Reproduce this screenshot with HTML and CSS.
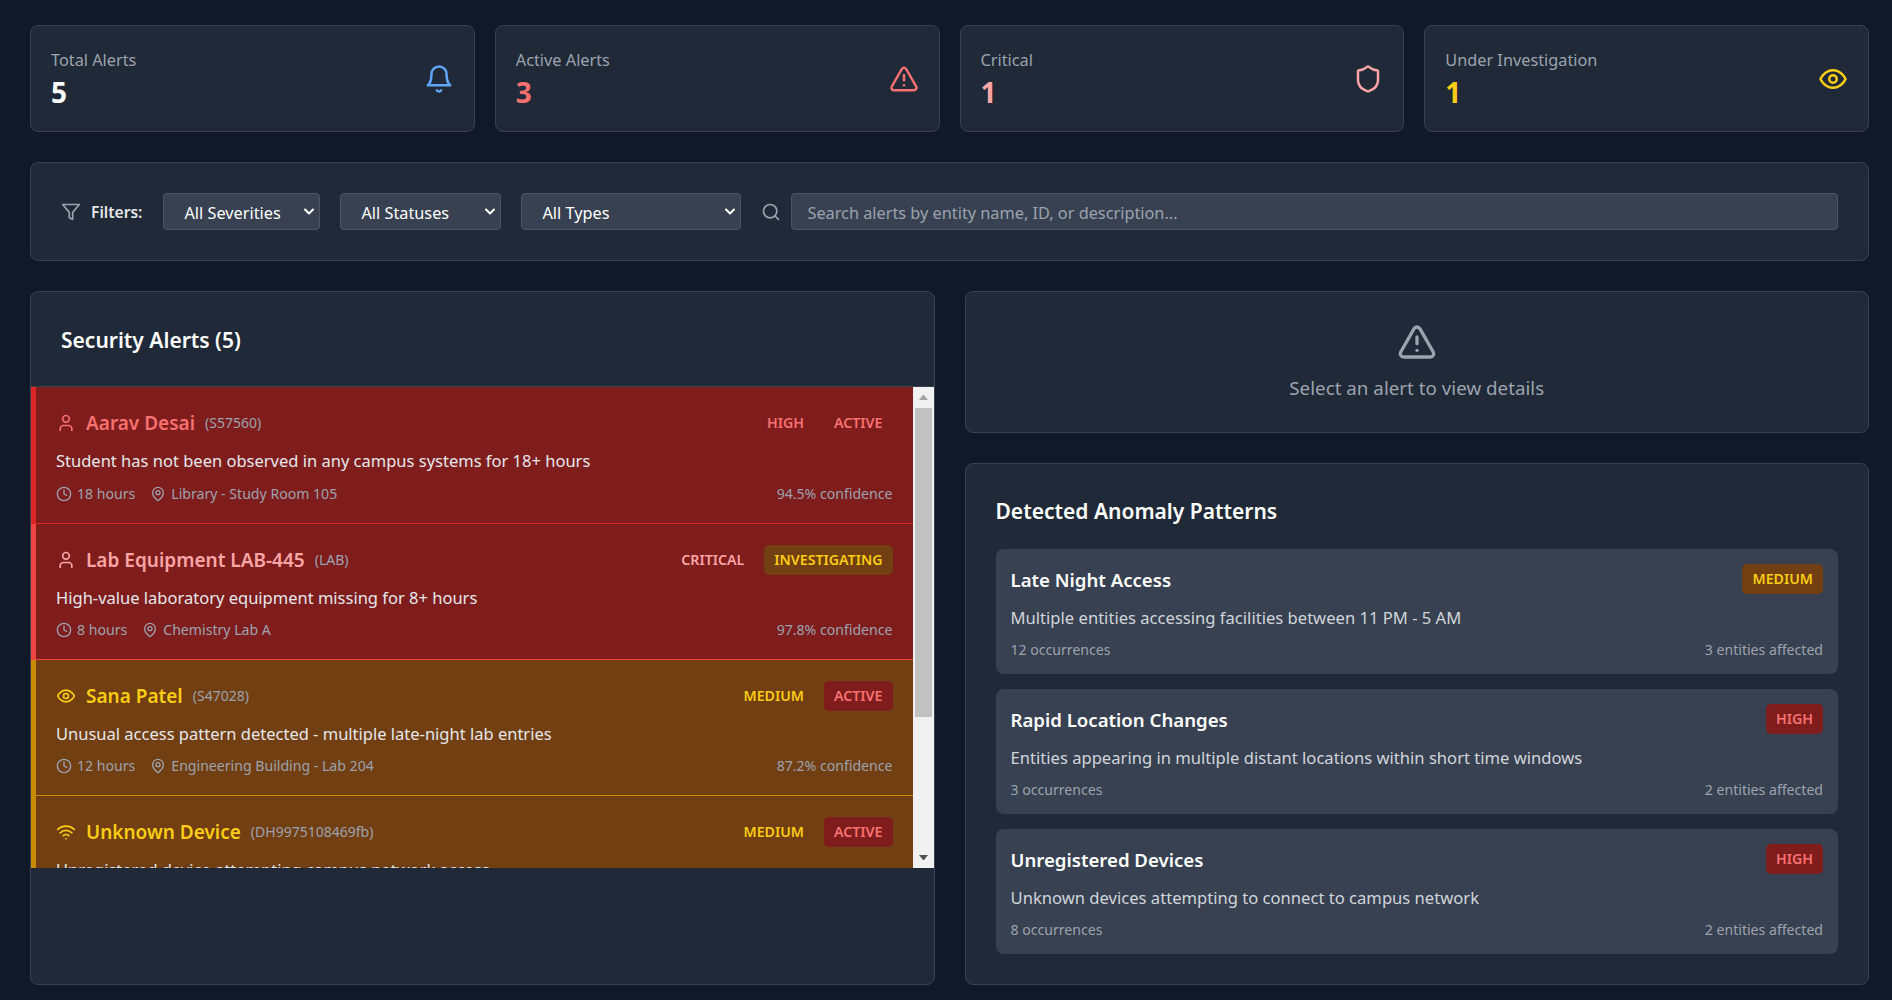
FILE: index.html
```html
<!DOCTYPE html>
<html lang="en">
<head>
    <meta charset="UTF-8">
    <title>Security Alerts</title>
    <link rel="stylesheet" href="styles.css">
</head>
<body>
    <svg class="sprites" aria-hidden="true">
        <symbol id="i-bell" viewBox="0 0 24 24"><path d="M6 8a6 6 0 0 1 12 0c0 7 3 9 3 9H3s3-2 3-9"/><path d="M10.3 21a1.94 1.94 0 0 0 3.4 0"/></symbol>
        <symbol id="i-alert" viewBox="0 0 24 24"><path d="m21.73 18-8-14a2 2 0 0 0-3.48 0l-8 14A2 2 0 0 0 4 21h16a2 2 0 0 0 1.73-3"/><path d="M12 9v4"/><path d="M12 17h.01"/></symbol>
        <symbol id="i-shield" viewBox="0 0 24 24"><path d="M20 13c0 5-3.5 7.5-7.66 8.95a1 1 0 0 1-.67-.01C7.5 20.5 4 18 4 13V6a1 1 0 0 1 1-1c2 0 4.5-1.2 6.24-2.72a1.17 1.17 0 0 1 1.52 0C14.51 3.81 17 5 19 5a1 1 0 0 1 1 1z"/></symbol>
        <symbol id="i-eye" viewBox="0 0 24 24"><path d="M2 12s3-7 10-7 10 7 10 7-3 7-10 7-10-7-10-7Z"/><circle cx="12" cy="12" r="3"/></symbol>
        <symbol id="i-filter" viewBox="0 0 24 24"><polygon points="22 3 2 3 10 12.46 10 19 14 21 14 12.46 22 3"/></symbol>
        <symbol id="i-search" viewBox="0 0 24 24"><circle cx="11" cy="11" r="8"/><path d="m21 21-4.3-4.3"/></symbol>
        <symbol id="i-user" viewBox="0 0 24 24"><path d="M19 21v-2a4 4 0 0 0-4-4H9a4 4 0 0 0-4 4v2"/><circle cx="12" cy="7" r="4"/></symbol>
        <symbol id="i-clock" viewBox="0 0 24 24"><circle cx="12" cy="12" r="10"/><polyline points="12 6 12 12 16 14"/></symbol>
        <symbol id="i-pin" viewBox="0 0 24 24"><path d="M20 10c0 6-8 12-8 12s-8-6-8-12a8 8 0 0 1 16 0Z"/><circle cx="12" cy="10" r="3"/></symbol>
        <symbol id="i-wifi" viewBox="0 0 24 24"><path d="M5 13a10 10 0 0 1 14 0"/><path d="M8.5 16.5a5 5 0 0 1 7 0"/><path d="M2 8.82a15 15 0 0 1 20 0"/><path d="M12 20h.01"/></symbol>
        <symbol id="i-chevron" viewBox="0 0 10 7"><polyline points="1 1.5 5 5.5 9 1.5"/></symbol>
    </svg>

    <div class="wrap">
        <!-- stats -->
        <section class="stats">
            <div class="stat">
                <div>
                    <p class="stat_label">Total Alerts</p>
                    <p class="stat_value">5</p>
                </div>
                <svg class="icon icon_stat text_blue"><use href="#i-bell"/></svg>
            </div>
            <div class="stat">
                <div>
                    <p class="stat_label">Active Alerts</p>
                    <p class="stat_value text_red">3</p>
                </div>
                <svg class="icon icon_stat text_red"><use href="#i-alert"/></svg>
            </div>
            <div class="stat">
                <div>
                    <p class="stat_label">Critical</p>
                    <p class="stat_value text_pink">1</p>
                </div>
                <svg class="icon icon_stat text_pink"><use href="#i-shield"/></svg>
            </div>
            <div class="stat">
                <div>
                    <p class="stat_label">Under Investigation</p>
                    <p class="stat_value text_yellow">1</p>
                </div>
                <svg class="icon icon_stat text_yellow"><use href="#i-eye"/></svg>
            </div>
        </section>

        <!-- filters -->
        <section class="filters">
            <svg class="icon icon_filter"><use href="#i-filter"/></svg>
            <span class="filters_label">Filters:</span>
            <div class="select_wrap">
                <select class="select select_severity">
                    <option>All Severities</option>
                    <option>Critical</option>
                    <option>High</option>
                    <option>Medium</option>
                    <option>Low</option>
                </select>
                <svg class="icon select_arrow"><use href="#i-chevron"/></svg>
            </div>
            <div class="select_wrap">
                <select class="select select_status">
                    <option>All Statuses</option>
                    <option>Active</option>
                    <option>Investigating</option>
                    <option>Resolved</option>
                </select>
                <svg class="icon select_arrow"><use href="#i-chevron"/></svg>
            </div>
            <div class="select_wrap">
                <select class="select select_type">
                    <option>All Types</option>
                    <option>Inactivity</option>
                    <option>Missing Equipment</option>
                    <option>Unusual Access</option>
                    <option>Unregistered Device</option>
                </select>
                <svg class="icon select_arrow"><use href="#i-chevron"/></svg>
            </div>
            <svg class="icon icon_search"><use href="#i-search"/></svg>
            <input class="search" type="text" placeholder="Search alerts by entity name, ID, or description...">
        </section>

        <div class="columns">
            <!-- alert list -->
            <section class="panel alerts">
                <header class="alerts_header">
                    <h2 class="panel_title">Security Alerts (5)</h2>
                </header>
                <div class="alert_box">
                    <div class="alert_list">
                        <article class="alert alert_high">
                            <div class="alert_top">
                                <div class="alert_who">
                                    <svg class="icon icon_kind"><use href="#i-user"/></svg>
                                    <span class="alert_name">Aarav Desai</span>
                                    <span class="alert_id">(S57560)</span>
                                </div>
                                <div class="badges">
                                    <span class="badge badge_high">High</span>
                                    <span class="badge badge_active">Active</span>
                                </div>
                            </div>
                            <p class="alert_desc">Student has not been observed in any campus systems for 18+ hours</p>
                            <div class="alert_meta">
                                <div class="meta_left">
                                    <span class="meta_item"><svg class="icon icon_meta"><use href="#i-clock"/></svg>18 hours</span>
                                    <span class="meta_item"><svg class="icon icon_meta"><use href="#i-pin"/></svg>Library - Study Room 105</span>
                                </div>
                                <span>94.5% confidence</span>
                            </div>
                        </article>
                        <article class="alert alert_critical">
                            <div class="alert_top">
                                <div class="alert_who">
                                    <svg class="icon icon_kind"><use href="#i-user"/></svg>
                                    <span class="alert_name">Lab Equipment LAB-445</span>
                                    <span class="alert_id">(LAB)</span>
                                </div>
                                <div class="badges">
                                    <span class="badge badge_critical">Critical</span>
                                    <span class="badge badge_investigating">Investigating</span>
                                </div>
                            </div>
                            <p class="alert_desc">High-value laboratory equipment missing for 8+ hours</p>
                            <div class="alert_meta">
                                <div class="meta_left">
                                    <span class="meta_item"><svg class="icon icon_meta"><use href="#i-clock"/></svg>8 hours</span>
                                    <span class="meta_item"><svg class="icon icon_meta"><use href="#i-pin"/></svg>Chemistry Lab A</span>
                                </div>
                                <span>97.8% confidence</span>
                            </div>
                        </article>
                        <article class="alert alert_medium">
                            <div class="alert_top">
                                <div class="alert_who">
                                    <svg class="icon icon_kind"><use href="#i-eye"/></svg>
                                    <span class="alert_name">Sana Patel</span>
                                    <span class="alert_id">(S47028)</span>
                                </div>
                                <div class="badges">
                                    <span class="badge badge_medium">Medium</span>
                                    <span class="badge badge_active">Active</span>
                                </div>
                            </div>
                            <p class="alert_desc">Unusual access pattern detected - multiple late-night lab entries</p>
                            <div class="alert_meta">
                                <div class="meta_left">
                                    <span class="meta_item"><svg class="icon icon_meta"><use href="#i-clock"/></svg>12 hours</span>
                                    <span class="meta_item"><svg class="icon icon_meta"><use href="#i-pin"/></svg>Engineering Building - Lab 204</span>
                                </div>
                                <span>87.2% confidence</span>
                            </div>
                        </article>
                        <article class="alert alert_medium">
                            <div class="alert_top">
                                <div class="alert_who">
                                    <svg class="icon icon_kind"><use href="#i-wifi"/></svg>
                                    <span class="alert_name">Unknown Device</span>
                                    <span class="alert_id">(DH9975108469fb)</span>
                                </div>
                                <div class="badges">
                                    <span class="badge badge_medium">Medium</span>
                                    <span class="badge badge_active">Active</span>
                                </div>
                            </div>
                            <p class="alert_desc">Unregistered device attempting campus network access</p>
                        </article>
                    </div>
                    <!-- scrollbar -->
                    <div class="scrollbar">
                        <span class="scroll_up"></span>
                        <span class="scroll_thumb"></span>
                        <span class="scroll_down"></span>
                    </div>
                </div>
            </section>

            <div class="side">
                <!-- details placeholder -->
                <section class="panel empty">
                    <svg class="icon icon_empty"><use href="#i-alert"/></svg>
                    <p class="empty_text">Select an alert to view details</p>
                </section>

                <!-- patterns -->
                <section class="panel patterns">
                    <h2 class="panel_title patterns_title">Detected Anomaly Patterns</h2>
                    <div class="pattern_list">
                        <article class="pattern">
                            <div class="pattern_top">
                                <h3 class="pattern_name">Late Night Access</h3>
                                <span class="badge badge_medium">Medium</span>
                            </div>
                            <p class="pattern_desc">Multiple entities accessing facilities between 11 PM - 5 AM</p>
                            <div class="pattern_meta">
                                <span>12 occurrences</span>
                                <span>3 entities affected</span>
                            </div>
                        </article>
                        <article class="pattern">
                            <div class="pattern_top">
                                <h3 class="pattern_name">Rapid Location Changes</h3>
                                <span class="badge badge_high">High</span>
                            </div>
                            <p class="pattern_desc">Entities appearing in multiple distant locations within short time windows</p>
                            <div class="pattern_meta">
                                <span>3 occurrences</span>
                                <span>2 entities affected</span>
                            </div>
                        </article>
                        <article class="pattern">
                            <div class="pattern_top">
                                <h3 class="pattern_name">Unregistered Devices</h3>
                                <span class="badge badge_high">High</span>
                            </div>
                            <p class="pattern_desc">Unknown devices attempting to connect to campus network</p>
                            <div class="pattern_meta">
                                <span>8 occurrences</span>
                                <span>2 entities affected</span>
                            </div>
                        </article>
                    </div>
                </section>
            </div>
        </div>
    </div>
</body>
</html>
```

FILE: styles.css
```css
/* reset */
* {box-sizing: border-box;}
body {
    margin: 0;
    background: #111827;
    color: #fff;
    font-family: 'Noto Sans', 'Open Sans', sans-serif;
    font-size: 16px;
    line-height: 1.7;
}
h2, h3, p {margin: 0;}
.sprites {display: none;}

.wrap {
    display: flex;
    flex-direction: column;
    gap: 30px;
    padding: 25px 23px 15px 30px;
}

/* icons */
.icon {
    flex: none;
    fill: none;
    stroke: currentColor;
    stroke-width: 2;
    stroke-linecap: round;
    stroke-linejoin: round;
}
.icon_stat {width: 30px; height: 30px;}
.icon_filter, .icon_search {width: 20px; height: 20px; color: #9ca3af;}
.icon_kind {width: 20px; height: 20px;}
.icon_meta {width: 16px; height: 16px;}
.icon_empty {width: 40px; height: 40px; color: #9ca3af; display: block; margin: 0 auto 11px;}

.text_blue {color: #60a5fa;}
.text_red {color: #f87171;}
.text_pink {color: #fca5a5;}
.text_yellow {color: #facc15;}

/* stats */
.stats {
    display: grid;
    grid-template-columns: repeat(4, 1fr);
    gap: 20px;
}
.stat {
    display: flex;
    align-items: center;
    justify-content: space-between;
    padding: 20px;
    background: #1f2937;
    border: 1px solid #374151;
    border-radius: 8px;
}
.stat_label {color: #9ca3af; font-size: 16.3px; line-height: 28px;}
.stat_value {font-size: 28px; font-weight: 700; line-height: 37px;}

/* filters */
.filters {
    display: flex;
    align-items: center;
    padding: 30px;
    background: #1f2937;
    border: 1px solid #374151;
    border-radius: 8px;
}
.filters_label {margin: 0 21px 0 10px; padding-top: 2px; font-size: 15.6px; font-weight: 600; color: #e5e7eb;}
.select_wrap {position: relative; margin-right: 20px;}
.select, .search {
    display: block;
    height: 37px;
    padding: 2px 15px 0;
    background: #374151;
    border: 1px solid #4b5563;
    border-radius: 4px;
    color: #fff;
    font-family: inherit;
    font-size: 16.3px;
}
.select {appearance: none; padding-left: 20px;}
.select_severity {width: 157px;}
.select_status {width: 161px;}
.select_type {width: 220px;}
.select_arrow {
    position: absolute;
    top: 15px;
    right: 6px;
    width: 10px;
    height: 7px;
    pointer-events: none;
    color: #fff;
}
.search {flex: 1; margin-left: 10px;}
.search::placeholder {color: #9ca3af;}

/* columns */
.columns {
    display: grid;
    grid-template-columns: 1fr 1fr;
    gap: 30px;
}
.side {
    display: flex;
    flex-direction: column;
    gap: 30px;
}
.panel {
    background: #1f2937;
    border: 1px solid #374151;
    border-radius: 8px;
}
.panel_title {font-size: 21px; font-weight: 600; line-height: 35px;}

/* alerts */
.alerts_header {
    padding: 31px 30px 28.4px;
    border-bottom: 1px solid #374151;
}
.alert_box {display: flex; height: 481px;}
.alert_list {flex: 1; overflow: hidden;}

.scrollbar {
    display: flex;
    flex: none;
    flex-direction: column;
    align-items: center;
    justify-content: space-between;
    width: 21px;
    background: #f1f1f1;
}
.scroll_up, .scroll_down {
    flex: none;
    width: 9px;
    height: 5px;
    margin: 8px 0;
    border-left: 4.5px solid transparent;
    border-right: 4.5px solid transparent;
}
.scroll_up {border-bottom: 5px solid #a3a3a3;}
.scroll_down {border-top: 5px solid #505050;}
.scroll_thumb {width: 17px; height: 309px; margin-bottom: auto; background: #c1c1c1;}

.alert {
    padding: 21px 20px 17px;
    border-left: 5px solid;
    border-bottom: 1px solid;
}
.alert_high {background: #7f1d1d; border-color: #dc2626;}
.alert_critical {background: #7f1d1d; border-color: #ef4444;}
.alert_medium {background: #713f12; border-color: #ca8a04;}
.alert_high .alert_who {color: #f87171;}
.alert_critical .alert_who {color: #fca5a5;}
.alert_medium .alert_who {color: #facc15;}

.alert_top {
    display: flex;
    align-items: center;
    justify-content: space-between;
    height: 30px;
    margin-bottom: 9px;
}
.alert_who {display: flex; align-items: center; gap: 10px;}
.alert_name {font-size: 19px; font-weight: 600; line-height: 30px;}
.alert_id {font-size: 14px; color: #9ca3af;}
.alert_desc {margin-bottom: 7px; font-size: 16.5px; line-height: 27.2px; color: #e5e7eb;}
.alert_meta, .pattern_meta {
    display: flex;
    justify-content: space-between;
    font-size: 14.1px;
    line-height: 24px;
    color: #9ca3af;
}
.meta_left {display: flex; gap: 15px;}
.meta_item {display: flex; align-items: center; gap: 5px;}

/* badges */
.badges {display: flex; gap: 10px;}
.badge {
    height: 30px;
    padding: 0 10px;
    border-radius: 5px;
    font-size: 14.2px;
    font-weight: 600;
    line-height: 30px;
    text-transform: uppercase;
}
.badge_high, .badge_active {background: #7f1d1d; color: #f87171;}
.badge_critical {background: #7f1d1d; color: #fca5a5;}
.badge_medium, .badge_investigating {background: #713f12; color: #facc15;}

/* empty */
.empty {padding: 30px 30px 29px; text-align: center;}
.empty_text {font-size: 18.8px; line-height: 30px; color: #9ca3af;}

/* patterns */
.patterns {padding: 30px;}
.patterns_title {margin-bottom: 20px;}
.pattern_list {display: flex; flex-direction: column; gap: 15px;}
.pattern {
    padding: 15px 15px 12px;
    background: #374151;
    border-radius: 8px;
}
.pattern_top {
    display: flex;
    align-items: center;
    justify-content: space-between;
    height: 30px;
    margin-bottom: 10px;
}
.pattern_name {padding-top: 2px; font-size: 18.6px; font-weight: 600; line-height: 28px;}
.pattern_desc {margin-bottom: 7px; font-size: 16.6px; line-height: 27px; color: #d1d5db;}
```
